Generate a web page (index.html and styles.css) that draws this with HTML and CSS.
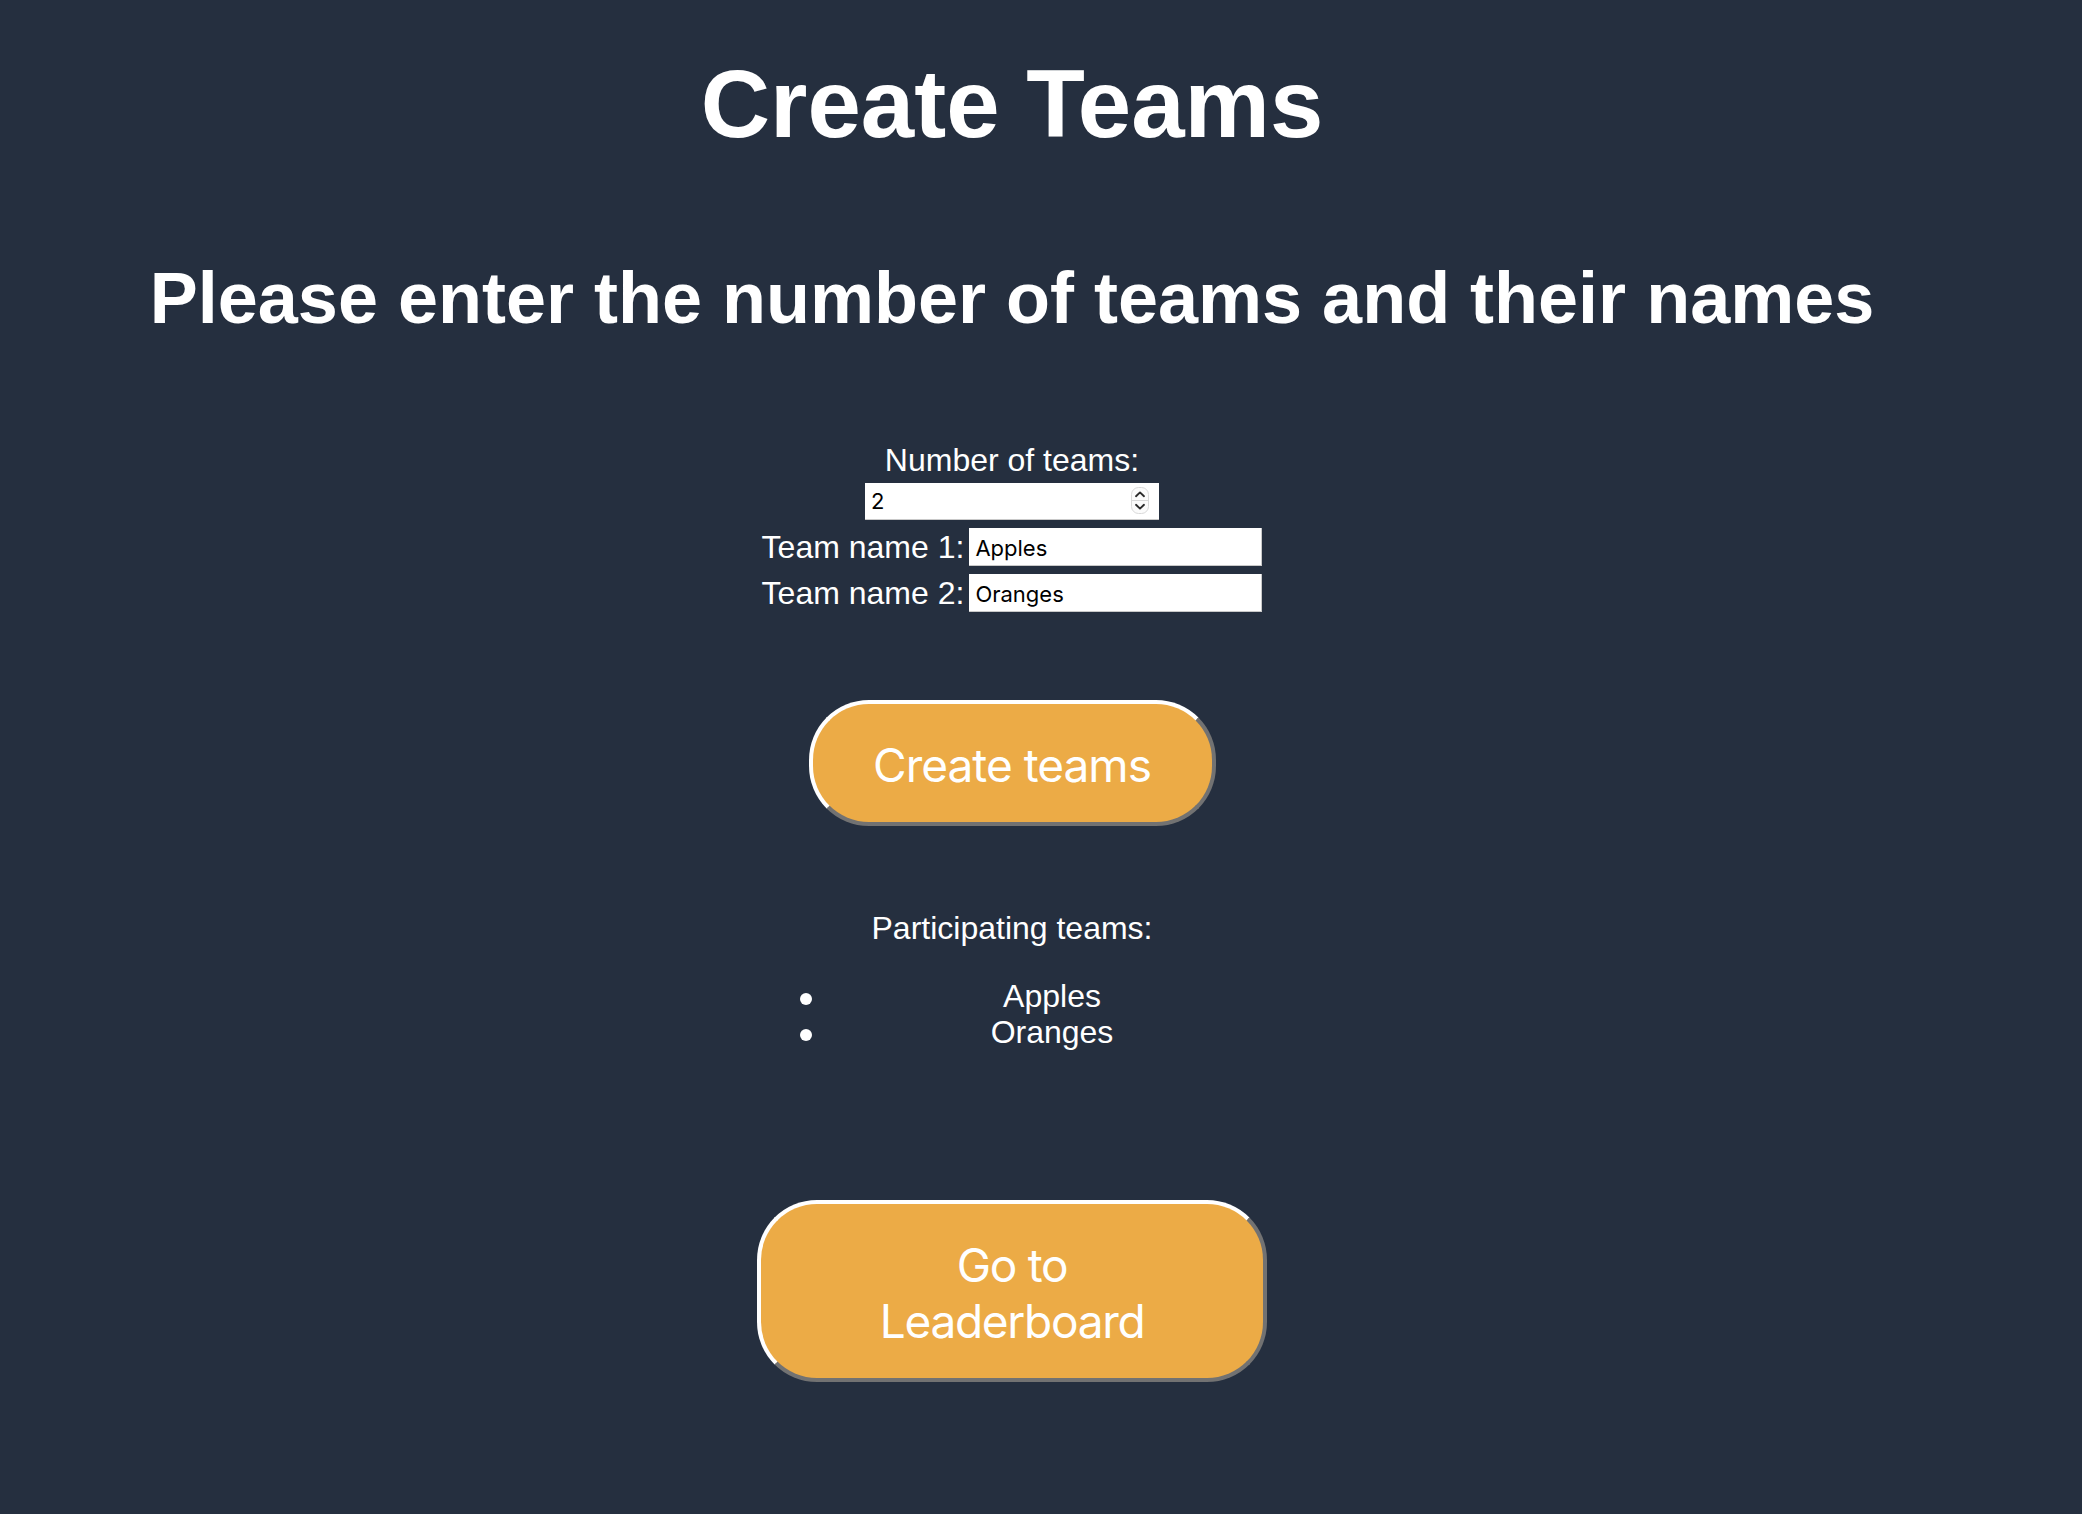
FILE: index.html
```html
<!DOCTYPE html>
<html lang="en">
<head>
<meta charset="utf-8">
<title>Create Teams</title>
<link rel="stylesheet" href="styles.css">
</head>
<body>
<main class="page">
  <h1 class="title">Create Teams</h1>
  <h2 class="subtitle">Please enter the number of teams and their names</h2>
  <form class="team-form">
    <label class="label-row" for="num-teams">Number of teams:</label>
    <div class="row">
      <div class="num-field">
        <input id="num-teams" class="num-input" type="number" value="2">
        <svg class="stepper" width="18" height="27" viewBox="0 0 18 27" aria-hidden="true">
          <rect x="0.5" y="0.5" width="17" height="26" rx="7" fill="#fbfbfb" stroke="#d9d9d9"/>
          <line x1="1" y1="13.5" x2="17" y2="13.5" stroke="#d9d9d9"/>
          <path d="M5 9.2 L9 5.4 L13 9.2" fill="none" stroke="#2b2b2b" stroke-width="1.9" stroke-linecap="round" stroke-linejoin="round"/>
          <path d="M5 17.8 L9 21.6 L13 17.8" fill="none" stroke="#2b2b2b" stroke-width="1.9" stroke-linecap="round" stroke-linejoin="round"/>
        </svg>
      </div>
    </div>
    <div class="row">
      <label class="row-label" for="team-1">Team name 1:</label>
      <input id="team-1" class="text-input" type="text" value="Apples">
    </div>
    <div class="row">
      <label class="row-label" for="team-2">Team name 2:</label>
      <input id="team-2" class="text-input" type="text" value="Oranges">
    </div>
  </form>
  <button class="btn btn-create" type="button">Create teams</button>
  <section class="teams">
    <p class="teams-title">Participating teams:</p>
    <ul class="team-list">
      <li>Apples</li>
      <li>Oranges</li>
    </ul>
  </section>
  <button class="btn btn-board" type="button">Go to Leaderboard</button>
</main>
</body>
</html>
```
FILE: styles.css
```css
body {
  margin: 0;
  background: #252f3f;
  color: #ffffff;
  font-family: "Liberation Sans", Arial, sans-serif;
}

.page {
  width: 2024px;
  display: flex;
  flex-direction: column;
  align-items: center;
}

.title {
  margin: 49px 0 0;
  font-size: 96px;
  line-height: 110px;
  font-weight: 700;
}

.subtitle {
  margin: 98px 0 0;
  font-size: 72px;
  line-height: 83px;
  font-weight: 700;
}

.team-form {
  margin-top: 102px;
  display: flex;
  flex-direction: column;
  align-items: center;
  font-size: 32px;
}

.label-row {
  height: 36px;
  line-height: 36px;
}

.row {
  height: 46px;
  display: flex;
  align-items: center;
  justify-content: center;
}

.num-field {
  width: 294px;
  height: 37px;
  box-sizing: border-box;
  display: flex;
  align-items: center;
  padding: 0 10px 0 6px;
  background: #ffffff;
  border-bottom: 1px solid #c9c9c9;
}

.num-input {
  flex: 1;
  min-width: 0;
  border: 0;
  padding: 0;
  outline: none;
  background: transparent;
  font-family: Inter, "Noto Sans", sans-serif;
  font-size: 22px;
  color: #000000;
  -moz-appearance: textfield;
  appearance: textfield;
}

.num-input::-webkit-inner-spin-button,
.num-input::-webkit-outer-spin-button {
  -webkit-appearance: none;
  margin: 0;
}

.stepper {
  display: block;
  flex: none;
}

.text-input {
  width: 293px;
  height: 38px;
  box-sizing: border-box;
  margin-left: 5px;
  border: 0;
  border-right: 1px solid #c9c9c9;
  border-bottom: 1px solid #c9c9c9;
  padding: 3px 6px 0;
  outline: none;
  background: #ffffff;
  font-family: Inter, "Noto Sans", sans-serif;
  font-size: 22px;
  color: #000000;
}

.btn {
  box-sizing: border-box;
  padding: 33px 0 29px;
  border: 4px solid;
  border-color: #ffffff #727272 #727272 #ffffff;
  border-radius: 60px;
  background: #ecab46;
  color: #ffffff;
  font-family: Inter, "Noto Sans", sans-serif;
  font-size: 46px;
  line-height: 56px;
  letter-spacing: -1px;
  text-align: center;
}

.btn-create {
  margin-top: 84px;
  width: 407px;
}

.btn-board {
  margin-top: 150px;
  width: 510px;
  padding: 33px 100px 29px;
  letter-spacing: -1.3px;
}

.teams {
  margin-top: 84px;
  width: 528px;
  font-size: 32px;
  text-align: center;
}

.teams-title {
  margin: 0;
  line-height: 37px;
}

.team-list {
  margin: 31px 0 0;
  padding: 0;
  list-style: none;
}

.team-list li {
  display: grid;
  grid-template-columns: 80px 1fr;
  line-height: 36px;
}

.team-list li::before {
  content: "";
  width: 12px;
  height: 12px;
  border-radius: 50%;
  background: #ffffff;
  justify-self: end;
  align-self: center;
  margin: 5px 16px 0 0;
}
```
